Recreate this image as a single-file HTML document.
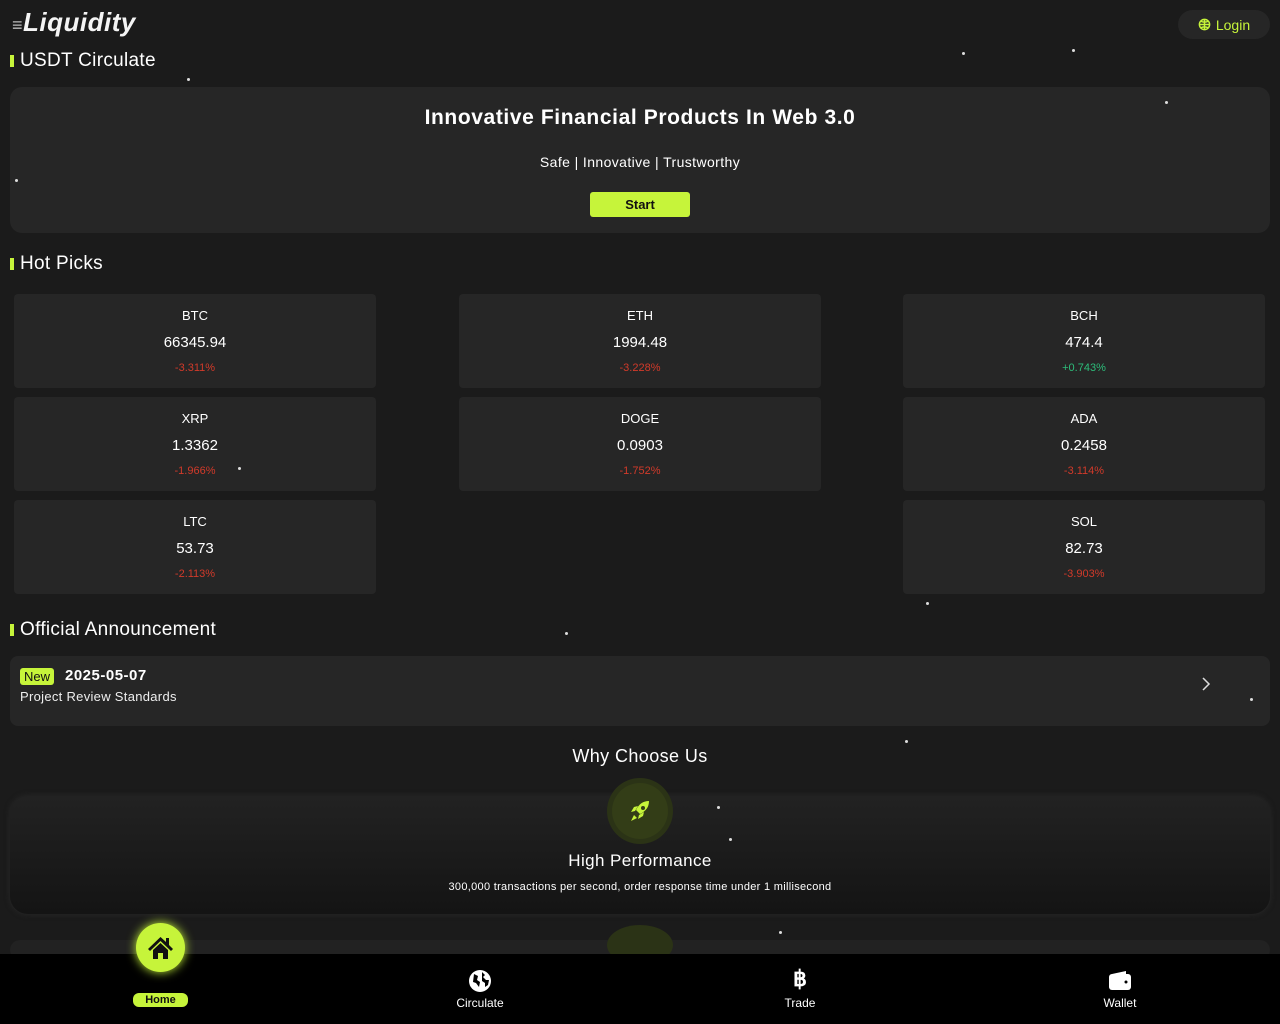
<!DOCTYPE html>
<html><head><meta charset="utf-8"><style>
*{box-sizing:border-box;margin:0;padding:0}
body{width:1280px;height:1024px;background:#1b1b1b;color:#fff;font-family:"Liberation Sans",sans-serif;position:relative;overflow:hidden}
.a{position:absolute}
.logo{left:12px;top:7px;font-size:26px;font-weight:bold;font-style:italic;color:#f4f4f4;letter-spacing:.5px}
.login{left:1178px;top:10px;width:92px;height:29px;border-radius:15px;background:#262626;color:#c6f43a;font-size:14px;display:flex;align-items:center;justify-content:center;gap:5px}
.h{font-size:19px;color:#fff;padding-left:10px;letter-spacing:.3px}
.h:before{content:"";position:absolute;left:0;top:5px;width:4px;height:12px;background:#c6f43a}
.hero{left:10px;top:87px;width:1260px;height:146px;background:#262626;border-radius:12px;text-align:center}
.card{width:362px;height:94px;background:#262626;border-radius:4px;text-align:center}
.card .s{margin-top:14px;font-size:13px}
.card .p{margin-top:11px;font-size:15px}
.card .c{margin-top:11px;font-size:11px;color:#d23a2a}
.ann{left:10px;top:656px;width:1260px;height:70px;background:#262626;border-radius:8px}
.why{left:10px;top:796px;width:1260px;height:118px;border-radius:18px;background:linear-gradient(#222,#141414);box-shadow:0 0 6px #2a2a2a;text-align:center}
.nav{left:0;top:954px;width:1280px;height:70px;background:#000}
.ni{font-size:12px;text-align:center;width:100px}
.dot{position:absolute;width:3px;height:3px;border-radius:50%;background:#ddd}
</style></head><body>
<div class="a logo"><span style="font-size:18px;font-style:normal;font-weight:normal;color:#bbb">≡</span>Liquidity</div>
<div class="a login"><svg width="13" height="13" viewBox="0 0 14 14" fill="none" stroke="#c6f43a" stroke-width="1.6"><circle cx="7" cy="7" r="5.5"/><path d="M1.5 7h11M7 1.5v11M3 3.5q4 2 8 0M3 10.5q4-2 8 0"/></svg>Login</div>
<div class="a h" style="left:10px;top:50px">USDT Circulate</div>
<div class="a hero">
<div style="margin-top:19px;font-size:21px;font-weight:bold;letter-spacing:.6px">Innovative Financial Products In Web 3.0</div>
<div style="margin-top:24px;font-size:14px;letter-spacing:.4px">Safe | Innovative | Trustworthy</div>
<div style="margin:22px auto 0;width:100px;height:25px;background:#c6f43a;color:#111;border-radius:3px;font-size:13px;font-weight:bold;line-height:25px">Start</div>
</div>
<div class="a h" style="left:10px;top:253px">Hot Picks</div>
<div class="a card" style="left:14px;top:294px"><div class="s">BTC</div><div class="p">66345.94</div><div class="c">-3.311%</div></div>
<div class="a card" style="left:459px;top:294px"><div class="s">ETH</div><div class="p">1994.48</div><div class="c">-3.228%</div></div>
<div class="a card" style="left:903px;top:294px"><div class="s">BCH</div><div class="p">474.4</div><div class="c" style="color:#2dbd7a">+0.743%</div></div>
<div class="a card" style="left:14px;top:397px"><div class="s">XRP</div><div class="p">1.3362</div><div class="c">-1.966%</div></div>
<div class="a card" style="left:459px;top:397px"><div class="s">DOGE</div><div class="p">0.0903</div><div class="c">-1.752%</div></div>
<div class="a card" style="left:903px;top:397px"><div class="s">ADA</div><div class="p">0.2458</div><div class="c">-3.114%</div></div>
<div class="a card" style="left:14px;top:500px"><div class="s">LTC</div><div class="p">53.73</div><div class="c">-2.113%</div></div>
<div class="a card" style="left:903px;top:500px"><div class="s">SOL</div><div class="p">82.73</div><div class="c">-3.903%</div></div>
<div class="a h" style="left:10px;top:619px">Official Announcement</div>
<div class="a ann">
<div class="a" style="left:10px;top:12px;background:#c6f43a;color:#111;font-size:13px;padding:1px 4px;border-radius:3px">New</div>
<div class="a" style="left:55px;top:11px;font-size:15px;font-weight:bold;letter-spacing:.5px">2025-05-07</div>
<div class="a" style="left:10px;top:33px;font-size:13px;color:#eee;letter-spacing:.3px">Project Review Standards</div>
<svg class="a" style="left:1190px;top:20px" width="12" height="16" viewBox="0 0 12 16" fill="none" stroke="#ddd" stroke-width="1.5"><path d="M3 2l6 6-6 6"/></svg>
</div>
<div class="a" style="left:0;width:1280px;top:746px;text-align:center;font-size:18px;letter-spacing:.4px">Why Choose Us</div>
<div class="a why">
<div style="margin-top:55px;font-size:17px;letter-spacing:.4px">High Performance</div>
<div style="margin-top:10px;font-size:11px;letter-spacing:.3px">300,000 transactions per second, order response time under 1 millisecond</div>
</div>
<div class="a" style="left:10px;top:940px;width:1260px;height:20px;border-radius:18px;background:#222"></div>
<div class="a" style="left:607px;top:778px;width:66px;height:66px;border-radius:50%;background:#2b3316"></div>
<div class="a" style="left:612px;top:783px;width:56px;height:56px;border-radius:50%;background:#333d17"></div>
<svg class="a" style="left:626px;top:797px" width="28" height="28" viewBox="0 0 28 28"><path d="M23 4c-6 0-10 3-13 9l4 4c6-3 9-7 9-13zM9 14l-4 1 3-5 4-1zM13 18l-1 4 5-3 1-4zM8 18l-3 6 6-3z" fill="#c6f43a"/><circle cx="17" cy="11" r="2" fill="#333d17"/></svg>
<div class="a" style="left:607px;top:925px;width:66px;height:40px;border-radius:50%;background:#2b3316"></div>
<div class="nav a"></div>
<div class="a" style="left:136px;top:923px;width:49px;height:49px;border-radius:50%;background:#c6f43a;box-shadow:0 0 10px #c6f43a"></div>
<svg class="a" style="left:146px;top:933px" width="29" height="28" viewBox="0 0 29 28"><path d="M14.5 4L2 16l2 2 10.5-10L25 18l2-2-4-4V5h-3v4z" fill="#111"/><path d="M7 17v9h5v-6h5v6h5v-9l-7.5-7z" fill="#111"/></svg>
<div class="a" style="left:133px;top:993px;width:55px;height:14px;border-radius:6px;background:#c6f43a;color:#111;font-size:11px;text-align:center;line-height:14px;font-weight:bold">Home</div>
<svg class="a" style="left:468px;top:969px" width="24" height="24" viewBox="0 0 24 24"><circle cx="12" cy="12" r="11" fill="#fff"/><path d="M6 5l4 2-1 4 3 2-1 5-3-4-3-1zM14 3l3 3-2 2 3 3 3 0-1 5-3 2 0-4-3-2z" fill="#000"/></svg>
<div class="a ni" style="left:430px;top:996px">Circulate</div>
<div class="a" style="left:750px;top:966px;width:100px;text-align:center;font-size:22px;font-weight:bold">฿</div>
<div class="a ni" style="left:750px;top:996px">Trade</div>
<svg class="a" style="left:1108px;top:970px" width="24" height="20" viewBox="0 0 24 20"><path d="M4 4L18 1v3z" fill="#fff"/><rect x="1" y="4" width="22" height="16" rx="3" fill="#fff"/><circle cx="18" cy="12" r="1.5" fill="#000"/></svg>
<div class="a ni" style="left:1070px;top:996px">Wallet</div>
<div class="dot" style="left:187px;top:78px"></div><div class="dot" style="left:962px;top:52px"></div><div class="dot" style="left:1072px;top:49px"></div><div class="dot" style="left:1165px;top:101px"></div><div class="dot" style="left:15px;top:179px"></div><div class="dot" style="left:238px;top:467px"></div><div class="dot" style="left:926px;top:602px"></div><div class="dot" style="left:565px;top:632px"></div><div class="dot" style="left:905px;top:740px"></div><div class="dot" style="left:717px;top:806px"></div><div class="dot" style="left:729px;top:838px"></div><div class="dot" style="left:1250px;top:698px"></div><div class="dot" style="left:779px;top:931px"></div>
</body></html>
